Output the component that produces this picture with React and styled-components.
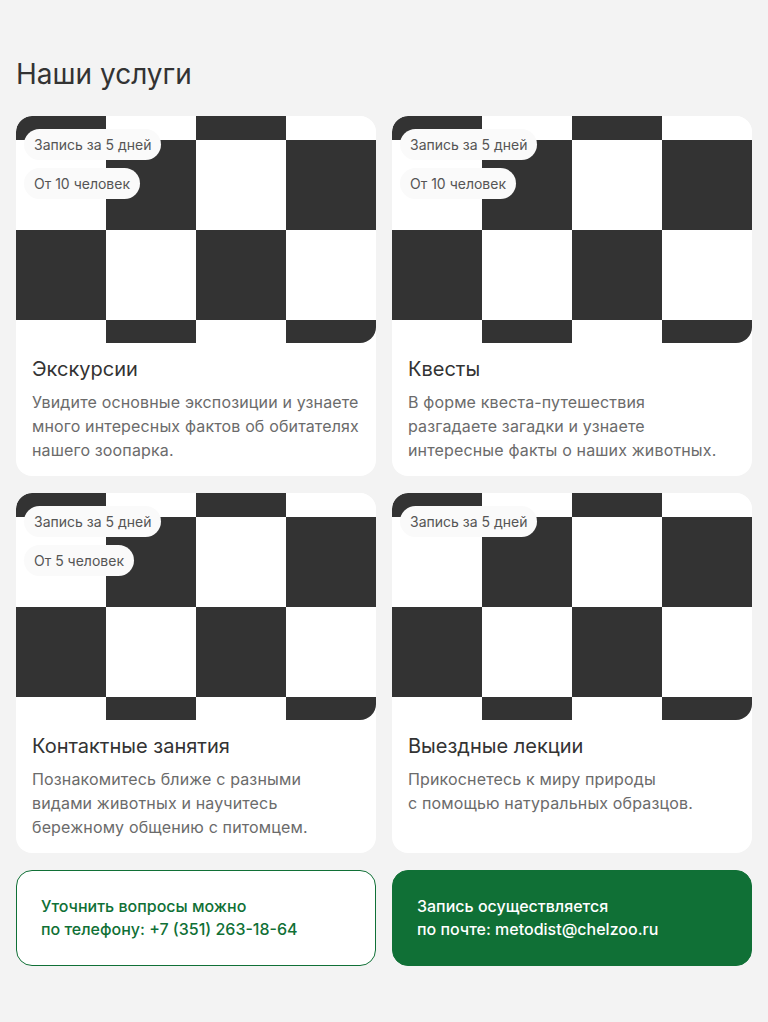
import React from "react";
import styled, { createGlobalStyle } from "styled-components";

const GlobalStyle = createGlobalStyle`
  * {
    box-sizing: border-box;
  }
  body {
    margin: 0;
    background: #f3f3f3;
    font-family: Inter, "Noto Sans", sans-serif;
  }
`;

const services = [
  {
    title: "Экскурсии",
    text: ["Увидите основные экспозиции и узнаете", "много интересных фактов об обитателях", "нашего зоопарка."],
    tags: ["Запись за 5 дней", "От 10 человек"]
  },
  {
    title: "Квесты",
    text: ["В форме квеста-путешествия", "разгадаете загадки и узнаете", "интересные факты о наших животных."],
    tags: ["Запись за 5 дней", "От 10 человек"]
  },
  {
    title: "Контактные занятия",
    text: ["Познакомитесь ближе с разными", "видами животных и научитесь", "бережному общению с питомцем."],
    tags: ["Запись за 5 дней", "От 5 человек"]
  },
  {
    title: "Выездные лекции",
    text: ["Прикоснетесь к миру природы", "с помощью натуральных образцов."],
    tags: ["Запись за 5 дней"]
  }
];

const ServiceCard = ({ data }) => (
  <Card>
    <Picture>
      <Tags>
        {data.tags.map(t => (
          <Tag key={t}>{t}</Tag>
        ))}
      </Tags>
    </Picture>
    <CardBody>
      <CardTitle>{data.title}</CardTitle>
      <CardText>
        {data.text.map((line, i) => (
          <React.Fragment key={i}>
            {line}
            {i < data.text.length - 1 && <br />}
          </React.Fragment>
        ))}
      </CardText>
    </CardBody>
  </Card>
);

export default function App() {
  return (
    <>
      <GlobalStyle />
      <Page>
        <Heading>Наши услуги</Heading>
        <Grid>
          {services.map(s => (
            <ServiceCard key={s.title} data={s} />
          ))}
          <InfoBox>
            Уточнить вопросы можно
            <br />
            по телефону: +7 (351) 263-18-64
          </InfoBox>
          <InfoBox filled>
            Запись осуществляется
            <br />
            по почте: metodist@chelzoo.ru
          </InfoBox>
        </Grid>
      </Page>
    </>
  );
}

const Page = styled.div`
  padding: 56px 16px 56px;
`;

const Heading = styled.h2`
  margin: 0 0 24px;
  font-size: 28px;
  line-height: 36px;
  font-weight: 400;
  color: #333;
`;

const Grid = styled.div`
  display: grid;
  grid-template-columns: 1fr 1fr;
  column-gap: 16px;
  row-gap: 17px;
`;

const Card = styled.div`
  background: #fff;
  border-radius: 16px;
  overflow: hidden;
  display: flex;
  flex-direction: column;
`;

const Picture = styled.div`
  position: relative;
  height: 227px;
  border-radius: 16px;
  background: repeating-conic-gradient(#333 0 25%, #fff 0 50%);
  background-size: 180px 180px;
  background-position: 0 24px;
`;

const Tags = styled.div`
  position: absolute;
  top: 13px;
  left: 8px;
  display: flex;
  flex-direction: column;
  align-items: flex-start;
  gap: 8px;
`;

const Tag = styled.span`
  background: #fafafa;
  border-radius: 16px;
  padding: 7px 10px;
  font-size: 14px;
  line-height: 17px;
  color: #555;
`;

const CardBody = styled.div`
  padding: 12px 16px 14px;
`;

const CardTitle = styled.h3`
  margin: 0;
  font-size: 20px;
  line-height: 28px;
  font-weight: 400;
  color: #333;
`;

const CardText = styled.p`
  margin: 7px 0 0;
  font-size: 16px;
  line-height: 24px;
  letter-spacing: 0.15px;
  white-space: nowrap;
  color: #6b6b6b;
`;

const InfoBox = styled.div`
  border: 1px solid #107036;
  border-radius: 16px;
  padding: 24px;
  font-weight: 500;
  font-size: 16px;
  line-height: 23px;
  background: ${p => (p.filled ? "#107036" : "#fff")};
  color: ${p => (p.filled ? "#fff" : "#107036")};
`;
